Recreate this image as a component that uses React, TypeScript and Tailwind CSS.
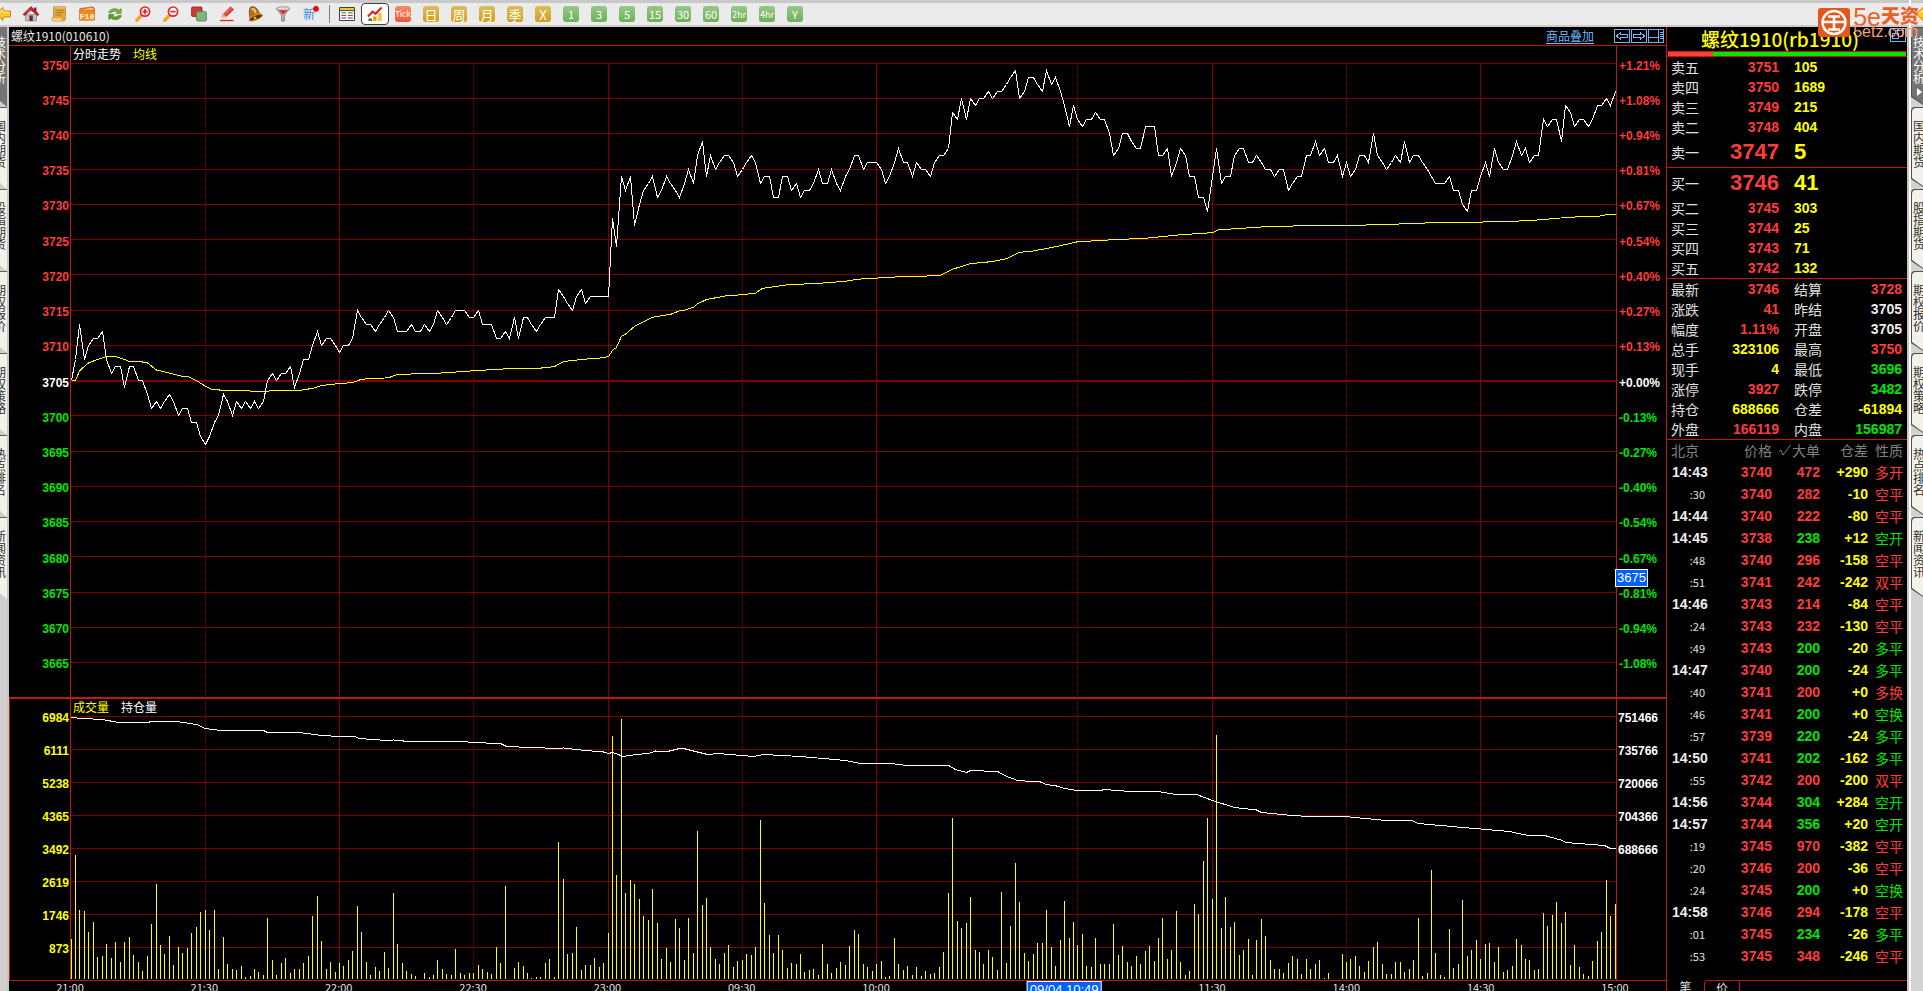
import type { ReactNode } from "react";

const MINUTES = 345;
const PLOT_W = 1545;
const PRICE_H = 634;
const VOL_H = 281;

// last price of every minute, as an offset from 3700
const prices = [
  5, 8, 13, 8, 10, 11, 11, 12, 8, 6, 7, 7, 4, 7, 7, 5, 5, 3, 1, 2,
  1, 2, 3, 2, 0, 1, 1, -1, -1, -3, -4, -3, -1, 0, 3, 2, 0, 2, 1, 2,
  1, 2, 1, 2, 5, 6, 5, 6, 6, 7, 4, 6, 8, 8, 10, 12, 10, 11, 11, 10,
  9, 10, 10, 11, 15, 14, 13, 13, 12, 13, 14, 15, 14, 12, 12, 12, 13, 12, 12, 13,
  12, 13, 15, 14, 13, 14, 15, 15, 15, 14, 14, 15, 13, 13, 13, 11, 11, 12, 11, 14,
  11, 14, 14, 13, 12, 13, 14, 14, 14, 18, 17, 16, 15, 17, 18, 16, 17, 17, 17, 17,
  17, 28, 24, 34, 32, 34, 27, 30, 32, 33, 34, 31, 32, 34, 33, 32, 31, 33, 35, 33,
  37, 39, 34, 37, 35, 36, 37, 37, 36, 34, 35, 36, 37, 36, 33, 34, 34, 31, 31, 34,
  34, 32, 33, 31, 32, 32, 33, 35, 33, 33, 35, 33, 32, 34, 35, 37, 37, 35, 36, 36,
  36, 35, 33, 34, 36, 38, 36, 36, 34, 36, 35, 35, 34, 36, 37, 37, 38, 43, 42, 45,
  42, 45, 44, 45, 45, 46, 45, 46, 46, 47, 48, 49, 45, 46, 48, 48, 47, 46, 49, 47,
  48, 46, 44, 41, 44, 42, 41, 42, 42, 43, 42, 42, 40, 37, 38, 40, 40, 39, 38, 38,
  41, 41, 41, 37, 37, 38, 34, 36, 38, 37, 34, 34, 31, 31, 29, 34, 38, 33, 34, 34,
  37, 38, 38, 36, 36, 37, 36, 35, 35, 34, 35, 35, 32, 33, 34, 34, 37, 37, 39, 37,
  38, 36, 36, 37, 34, 36, 34, 35, 37, 37, 36, 40, 37, 36, 35, 36, 37, 36, 39, 36,
  37, 37, 36, 35, 34, 33, 33, 33, 34, 32, 32, 30, 29, 32, 32, 34, 36, 34, 38, 36,
  35, 35, 37, 39, 37, 38, 36, 37, 37, 42, 41, 42, 42, 39, 44, 43, 41, 42, 42, 41,
  42, 44, 44, 45, 44, 46,
];

// [minute, average price]
const average = [
  [0, 3705], [1, 3705], [2, 3706.4], [4, 3707.5], [6, 3708], [8, 3708.4], [10, 3708.4], [12, 3708],
  [13, 3707.7], [15.5, 3707.7], [17, 3707.5], [19, 3706.5], [22.5, 3706], [25, 3705.6], [26.5, 3705.5],
  [28, 3705], [30, 3704.2], [31.5, 3703.8], [34, 3703.6], [42, 3703.5], [51, 3703.6], [54, 3703.9],
  [56, 3704.3], [60, 3704.6], [63, 3704.7], [65, 3705.2], [71, 3705.4], [73, 3705.9], [81, 3706],
  [90, 3706.4], [98, 3706.7], [106, 3706.8], [108, 3707], [110, 3707.7], [114, 3708], [118, 3708.2],
  [120, 3708.4], [121, 3709.3], [122, 3709.7], [123, 3711.3], [124, 3711.6], [126, 3712.7], [130, 3714],
  [134, 3714.4], [136, 3714.9], [137, 3715], [139, 3715.4], [140, 3715.9], [142, 3716.5], [146, 3717],
  [150, 3717.2], [153, 3717.4], [154.5, 3718.1], [160, 3718.6], [167, 3718.8], [173, 3719.1],
  [176, 3719.4], [184, 3719.7], [194, 3719.9], [197, 3720.8], [201, 3721.6], [206, 3721.9],
  [209, 3722.3], [212, 3723.2], [215, 3723.4], [220, 3724], [225, 3724.7], [233, 3725], [240, 3725.2],
  [248, 3725.7], [255, 3726], [256.5, 3726.4], [266, 3726.8], [276, 3727], [285, 3727], [296, 3727.2],
  [304, 3727.4], [315, 3727.5], [322, 3727.6], [328, 3727.8], [335, 3728.2], [341, 3728.3],
  [343.5, 3728.6], [345, 3728.6],
];

// bar height of every minute
const volumes = [
  40, 124, 69, 68, 47, 57, 22, 23, 35, 21, 37, 17, 37, 42, 24, 17, 8, 23, 55, 95,
  34, 25, 43, 14, 32, 26, 31, 46, 52, 67, 69, 49, 69, 10, 42, 15, 10, 9, 13, 2,
  3, 10, 7, 4, 61, 19, 4, 16, 21, 6, 10, 10, 16, 23, 63, 83, 38, 10, 17, 7,
  16, 13, 19, 28, 73, 47, 17, 4, 12, 8, 27, 11, 86, 35, 16, 8, 5, 3, 0, 6,
  2, 4, 19, 10, 5, 4, 30, 6, 4, 6, 6, 14, 10, 7, 5, 32, 16, 93, 0, 11,
  17, 13, 6, 1, 2, 2, 16, 20, 2, 137, 100, 25, 26, 52, 9, 14, 14, 21, 12, 16,
  46, 243, 104, 260, 86, 99, 95, 80, 63, 59, 90, 56, 20, 31, 17, 60, 51, 19, 61, 26,
  148, 74, 81, 32, 20, 15, 26, 34, 12, 18, 19, 25, 24, 32, 159, 76, 44, 26, 44, 29,
  11, 16, 15, 25, 7, 9, 10, 4, 35, 15, 6, 11, 17, 14, 33, 49, 45, 15, 12, 8,
  15, 18, 2, 3, 41, 15, 9, 13, 4, 12, 3, 8, 5, 6, 12, 27, 86, 161, 58, 51,
  56, 82, 29, 27, 15, 29, 22, 9, 87, 16, 53, 116, 77, 26, 18, 25, 36, 36, 69, 32,
  13, 39, 78, 41, 57, 34, 45, 13, 12, 41, 15, 15, 15, 55, 24, 33, 17, 13, 23, 15,
  28, 33, 18, 41, 61, 20, 29, 68, 17, 4, 8, 75, 65, 118, 161, 80, 244, 51, 82, 52,
  57, 24, 29, 40, 4, 39, 60, 43, 19, 10, 10, 6, 16, 23, 20, 5, 20, 10, 15, 19,
  1, 6, 0, 0, 25, 17, 20, 23, 13, 7, 18, 32, 37, 15, 5, 5, 17, 17, 7, 10,
  19, 61, 3, 6, 109, 26, 4, 2, 50, 11, 15, 79, 23, 29, 39, 20, 35, 36, 17, 32,
  7, 9, 13, 40, 34, 20, 19, 9, 10, 66, 53, 64, 77, 56, 67, 14, 34, 12, 5, 3,
  18, 38, 47, 99, 63, 75,
];

// [minute, y] of the open interest line
const openInterest = [
  [0, 18], [2.5, 19], [7, 20], [10.7, 23], [17, 23], [18, 22], [23.5, 22], [28, 25], [30, 29],
  [33.5, 31], [43, 31], [44, 33], [51, 33], [56, 36], [60, 37], [63.3, 37], [64.5, 39], [70.5, 41],
  [72, 40.5], [75.5, 42], [86.5, 42], [92.7, 43.5], [96, 44], [97.3, 47], [108.7, 49], [110, 48.5],
  [115, 51], [119, 52.5], [120, 54], [121, 53], [122.3, 55], [123.3, 57], [126.3, 55], [129, 54],
  [130.5, 51.5], [133.3, 52], [136, 49], [137.3, 49.5], [142.3, 55], [144.6, 54], [152.4, 57],
  [154.7, 55], [163, 57], [173, 61], [176.5, 64], [183.4, 64], [186.6, 66], [196, 66], [197.6, 70],
  [200, 73], [201, 71], [207, 72], [208.5, 76], [211.6, 81], [216.6, 82.5], [218, 85], [220.3, 86.5],
  [222, 89], [225, 91], [230, 91], [231, 90], [236.7, 92], [243, 92], [246.7, 95], [251.5, 95],
  [255, 101], [260, 108], [265, 110.5], [266, 113], [272.7, 116], [276.8, 117], [285.7, 117.5],
  [294, 121], [299.5, 121], [301, 124], [307.3, 126.5], [311, 128], [316.2, 130], [321.4, 132],
  [325, 135.5], [329.6, 136.5], [333.3, 141], [334, 143], [342.6, 146], [344, 149], [345, 149],
];

const priceLabels = Array.from({ length: 18 }, (_, i) => 3750 - i * 5);
const percentLabels = [
  "+1.21%", "+1.08%", "+0.94%", "+0.81%", "+0.67%", "+0.54%", "+0.40%", "+0.27%", "+0.13%",
  "+0.00%", "-0.13%", "-0.27%", "-0.40%", "-0.54%", "-0.67%", "-0.81%", "-0.94%", "-1.08%",
];
const volumeLabels = ["6984", "6111", "5238", "4365", "3492", "2619", "1746", "873"];
const interestLabels = ["751466", "735766", "720066", "704366", "688666", "", "", ""];

// label and the minutes until the next one
const timeLabels: [string, number][] = [
  ["21:00", 30], ["21:30", 30], ["22:00", 30], ["22:30", 30], ["23:00", 30], ["09:30", 30],
  ["10:00", 75], ["11:30", 30], ["14:00", 30], ["14:30", 30], ["15:00", 0],
];
const solidLines = [60, 120, 180, 255, 315];
const dottedLines = [30, 90, 150, 225, 285];

const RED = "text-[#ff3c3c]";
const GREEN = "text-[#00e600]";
const YELLOW = "text-[#ffff00]";
const WHITE = "text-[#ececec]";

const asks = [
  ["卖五", "3751", "105"],
  ["卖四", "3750", "1689"],
  ["卖三", "3749", "215"],
  ["卖二", "3748", "404"],
  ["卖一", "3747", "5"],
];
const bids = [
  ["买一", "3746", "41"],
  ["买二", "3745", "303"],
  ["买三", "3744", "25"],
  ["买四", "3743", "71"],
  ["买五", "3742", "132"],
];

const stats = [
  ["最新", "3746", RED, "结算", "3728", RED],
  ["涨跌", "41", RED, "昨结", "3705", WHITE],
  ["幅度", "1.11%", RED, "开盘", "3705", WHITE],
  ["总手", "323106", YELLOW, "最高", "3750", RED],
  ["现手", "4", YELLOW, "最低", "3696", GREEN],
  ["涨停", "3927", RED, "跌停", "3482", GREEN],
  ["持仓", "688666", YELLOW, "仓差", "-61894", YELLOW],
  ["外盘", "166119", RED, "内盘", "156987", GREEN],
];

const ticks = [
  ["14:43", "3740", "472", RED, "+290", "多开", RED],
  [":30", "3740", "282", RED, "-10", "空平", RED],
  ["14:44", "3740", "222", RED, "-80", "空平", RED],
  ["14:45", "3738", "238", GREEN, "+12", "空开", GREEN],
  [":48", "3740", "296", RED, "-158", "空平", RED],
  [":51", "3741", "242", RED, "-242", "双平", RED],
  ["14:46", "3743", "214", RED, "-84", "空平", RED],
  [":24", "3743", "232", RED, "-130", "空平", RED],
  [":49", "3743", "200", GREEN, "-20", "多平", GREEN],
  ["14:47", "3740", "200", GREEN, "-24", "多平", GREEN],
  [":40", "3741", "200", RED, "+0", "多换", RED],
  [":46", "3741", "200", GREEN, "+0", "空换", GREEN],
  [":57", "3739", "220", GREEN, "-24", "多平", GREEN],
  ["14:50", "3741", "202", GREEN, "-162", "多平", GREEN],
  [":55", "3742", "200", RED, "-200", "双平", RED],
  ["14:56", "3744", "304", GREEN, "+284", "空开", GREEN],
  ["14:57", "3744", "356", GREEN, "+20", "空开", GREEN],
  [":19", "3745", "970", RED, "-382", "空平", RED],
  [":20", "3746", "200", RED, "-36", "空平", RED],
  [":24", "3745", "200", GREEN, "+0", "空换", GREEN],
  ["14:58", "3746", "294", RED, "-178", "空平", RED],
  [":01", "3745", "234", GREEN, "-26", "多平", GREEN],
  [":53", "3745", "348", RED, "-246", "空平", RED],
];

const sideTabs = ["技术分析", "国内期货", "股指期货", "期权报价", "期权策略", "热点排名", "新闻资讯"];

const mx = (m: number) => Math.floor((m * (PLOT_W - 1)) / MINUTES) + 0.5;
const py = (p: number) => Math.round((3750 - p) * 7.047) + 0.5;

function Icon({ children }: { children: ReactNode }) {
  return (
    <svg viewBox="0 0 16 16" className="h-4 w-4">
      {children}
    </svg>
  );
}

const backArrow = (
  <Icon>
    <path d="M1 8 8 1.5V5h7.5v6H8v3.5z" fill="#ffc629" stroke="#c98a10" strokeWidth="1" />
    <path d="M3 8 7.4 4V6.2H14" fill="none" stroke="#fff0a0" />
  </Icon>
);

const drawings: { name: string; icon: ReactNode }[] = [
  { name: "后退", icon: backArrow },
  {
    name: "首页",
    icon: (
      <Icon>
        <path d="M2.5 8.5h11V15H2.5z" fill="#b9c3cb" stroke="#74808a" strokeWidth=".6" />
        <path d="M11.2 1.5h2.2v4h-2.2z" fill="#8e1414" />
        <path d="M8 .6 0 8.4l1.6 1.2L8 4l6.4 5.6L16 8.4z" fill="#c41c1c" stroke="#7e0c0c" strokeWidth=".6" />
        <path d="M6.4 9.5h3.4V15H6.4z" fill="#8c1a12" />
        <path d="M4 6.5 8 2.8" stroke="#f07070" strokeWidth=".8" />
      </Icon>
    ),
  },
  {
    name: "公告",
    icon: (
      <Icon>
        <path d="M2.5 .8h12v11.7c0 1.8-1 2.5-3 2.5H2.5C1 15 .8 14 .8 12h1.7z" fill="#e0a838" stroke="#a87420" strokeWidth=".6" />
        <path d="M4.5 4.2h8M4.5 6.6h8M4.5 9h6" stroke="#a87018" strokeWidth=".8" />
        <path d="M3 1.3h11v1.2H3z" fill="#f5cc66" />
        <path d="M.8 12h9.6c0 2 .4 3 1.2 3H3C1.2 15 .8 14 .8 12z" fill="#f4cc74" />
      </Icon>
    ),
  },
  {
    name: "F10",
    icon: (
      <Icon>
        <path d="M1 2.5 14 .8l1.5 2V14H.5V4z" fill="#e77d1c" stroke="#b65a0a" strokeWidth=".6" />
        <path d="M2 3.6 14.2 2v1.6H2z" fill="#fbe0b0" />
        <path d="M.5 5h15v9.5H.5z" fill="#ee8a24" />
        <text x="8" y="12.8" textAnchor="middle" fontSize="8" fontWeight="bold" fill="#fff6dc" fontFamily="Liberation Mono">
          F10
        </text>
      </Icon>
    ),
  },
  {
    name: "刷新",
    icon: (
      <Icon>
        <path d="M1.6 6.8C2.4 2.6 9 1.4 12 4.2L14.2 2.6V7.6H8.8L10.8 6C8.4 4.6 5.6 5.2 4.6 6.8z" fill="#7cb342" stroke="#4b8420" strokeWidth=".6" />
        <path d="M14.4 9.6c-.8 4.2-7.4 5.2-10.4 2.4L1.8 13.6v-5h5.4L5.2 10.2c2.4 1.4 5.2.8 6.2-.6z" fill="#5f9e2c" stroke="#3f7418" strokeWidth=".6" />
      </Icon>
    ),
  },
  {
    name: "放大",
    icon: (
      <Icon>
        <path d="M6.4 9.4 1.8 14.2" stroke="#f0a81c" strokeWidth="3.4" strokeLinecap="round" />
        <circle cx="10" cy="5.6" r="4.6" fill="#fff" stroke="#e02828" strokeWidth="1.7" />
        <path d="M7.4 5.6h5.2M10 3v5.2" stroke="#e02828" strokeWidth="1.7" />
      </Icon>
    ),
  },
  {
    name: "缩小",
    icon: (
      <Icon>
        <path d="M6.4 9.4 1.8 14.2" stroke="#f0a81c" strokeWidth="3.4" strokeLinecap="round" />
        <circle cx="10" cy="5.6" r="4.6" fill="#fff" stroke="#e02828" strokeWidth="1.7" />
        <path d="M7.4 5.6h5.2" stroke="#e02828" strokeWidth="1.7" />
      </Icon>
    ),
  },
  {
    name: "叠加",
    icon: (
      <Icon>
        <rect x=".6" y="1" width="10.4" height="9.4" rx="1" fill="#cf3a3a" stroke="#8c1c1c" strokeWidth=".8" />
        <rect x="5.4" y="5.6" width="10" height="9.4" rx="1.4" fill="#7db87a" stroke="#4a7f48" strokeWidth=".8" />
      </Icon>
    ),
  },
  {
    name: "画线",
    icon: (
      <Icon>
        <path d="M3 11.5 4.2 8 11.6.8l3 2.8L7 10.8z" fill="#e8402c" stroke="#a82010" strokeWidth=".5" />
        <path d="M4.2 8 7 10.8l-4.4 1.4z" fill="#f6cf8a" />
        <path d="M5.6 7.6 12.6 1.8" stroke="#ff9a80" />
        <path d="M1 14.5h13.5" stroke="#d83020" strokeWidth="1.4" />
      </Icon>
    ),
  },
  {
    name: "预警",
    icon: (
      <Icon>
        <path d="M3.2 1.2C7 -.4 10 2 11.6 5.4c.8 2 2.2 3 4 3.8L2.2 14.8C3.4 12 2.6 9 2.2 6z" fill="#b8701c" stroke="#6e3e08" strokeWidth=".8" />
        <ellipse cx="8.8" cy="11.6" rx="6.8" ry="2.4" transform="rotate(-22 8.8 11.6)" fill="#5c2c04" stroke="#e2a840" />
        <path d="M4.6 3.4c1.8-1 3.4.4 4.2 3.6" stroke="#f8d890" fill="none" strokeWidth="1.6" />
        <circle cx="8" cy="12" r="1.5" fill="#f0b030" />
      </Icon>
    ),
  },
  {
    name: "过滤",
    icon: (
      <Icon>
        <path d="M1.4 2.6 6.6 9v6h2.8V9l5.2-6.4z" fill="#b8b8bc" stroke="#707074" strokeWidth=".8" />
        <ellipse cx="8" cy="2.6" rx="6.6" ry="1.8" fill="#f2d8d8" stroke="#85858a" strokeWidth=".8" />
        <path d="M4 4.2h8L8.6 8H7.4z" fill="#e82828" />
      </Icon>
    ),
  },
  {
    name: "新消息",
    icon: (
      <Icon>
        <text x="6" y="12.6" textAnchor="middle" fontSize="12" fill="#3a8ae6" fontFamily="Noto Sans CJK SC">
          新
        </text>
        <circle cx="13" cy="2.8" r="2.9" fill="#f40808" />
      </Icon>
    ),
  },
];

const tableIcon = (
  <Icon>
    <path d="M.5 1.5h15v13H.5z" fill="#fff" stroke="#404040" />
    <path d="M1 2h14v2H1z" fill="#f4c820" />
    <path d="M1 4.6h14" stroke="#404040" />
    <path d="M2.4 6.8h4.8M9 6.8h4.8" stroke="#208030" />
    <path d="M2.4 9.4h4.8M9 9.4h4.8" stroke="#e02020" />
    <path d="M2.4 12h4.8M9 12h4.8" stroke="#2838c0" />
  </Icon>
);

const trendIcon = (
  <Icon>
    <path d="M1.4 12.4h3.6V15H1.4z" fill="#2f8f2f" />
    <path d="M6 10.4h3.6V15H6z" fill="#f0a020" />
    <path d="M10.8 7h4v8h-4z" fill="#f6c838" />
    <path d="M1 10.4 5.6 5.6l3 2.2L14.6 1.6" fill="none" stroke="#e02020" strokeWidth="2.2" />
  </Icon>
);

const periods: [string, string][] = [
  ["Tick", "bg-[#f0582c] font-['Liberation_Sans',sans-serif] text-[9px]"],
  ["日", "bg-[#cfa01c] text-[13px]"],
  ["周", "bg-[#cfa01c] text-[13px]"],
  ["月", "bg-[#cfa01c] text-[13px]"],
  ["季", "bg-[#cfa01c] text-[13px]"],
  ["X", "bg-[#cfa01c] text-[13px]"],
  ["1", "bg-[#6cb058] text-[11px]"],
  ["3", "bg-[#6cb058] text-[11px]"],
  ["5", "bg-[#6cb058] text-[11px]"],
  ["15", "bg-[#6cb058] text-[11px]"],
  ["30", "bg-[#6cb058] text-[11px]"],
  ["60", "bg-[#6cb058] text-[11px]"],
  ["2hr", "bg-[#6cb058] text-[9px]"],
  ["4hr", "bg-[#6cb058] text-[9px]"],
  ["Y", "bg-[#6cb058] text-[11px]"],
];

function Toolbar() {
  return (
    <div className="flex h-[27px] shrink-0 items-center overflow-hidden border-t-[3px] border-b-2 border-t-[#c9c9c9] border-b-[#d0cac8] bg-[#ebebeb]">
      <div className="-ml-[11px] flex items-center">
        {drawings.map((d) => (
          <button key={d.name} aria-label={d.name} className="flex h-[22px] w-7 items-center justify-center">
            {d.icon}
          </button>
        ))}
        <span className="flex w-2 justify-center">
          <span className="h-[18px] w-px bg-[#808080]" />
        </span>
        <button aria-label="报价" className="flex h-[22px] w-7 items-center justify-center">
          {tableIcon}
        </button>
        <button aria-label="分时" className="flex h-[22px] w-7 items-center justify-center rounded border border-[#404040] bg-white">
          {trendIcon}
        </button>
        {periods.map(([label, style]) => (
          <button key={label} className="flex h-[22px] w-7 items-center justify-center">
            <span
              className={`flex h-4 w-4 items-center justify-center rounded-[3px] bg-linear-to-b from-white/30 to-transparent leading-none text-[#fffff0] ${style}`}
            >
              {label}
            </span>
          </button>
        ))}
      </div>
    </div>
  );
}

function LeftRail() {
  return (
    <nav className="flex w-[9px] shrink-0 flex-col overflow-hidden border-r-2 border-[#ccc4c0] bg-[#cfcfcf]">
      {sideTabs.map((tab, i) => (
        <button
          key={tab}
          className={`flex shrink-0 justify-end overflow-hidden border-t pr-px text-xs leading-[12px] [clip-path:polygon(0_0,100%_0,100%_100%,0_calc(100%-6px))] ${
            i === 0 ? "h-20 border-[#747474] bg-[#747474] pt-2 text-white" : "h-[82px] border-[#606060] bg-[#f2f2ea] pt-3 text-[#303030]"
          }`}
        >
          <span className="w-3 shrink-0 break-all">{tab}</span>
        </button>
      ))}
    </nav>
  );
}

function RightRail() {
  return (
    <aside className="flex w-3 shrink-0 flex-col overflow-hidden bg-[#d2d2d2]">
      <div className="flex h-[27px] shrink-0 items-center border-t-[3px] border-b-2 border-t-[#c9c9c9] border-b-[#d0cac8] bg-[#ebebeb] pl-1">
        <span className="shrink-0">{backArrow}</span>
      </div>
      {sideTabs.map((tab, i) => (
        <button
          key={tab}
          className={`shrink-0 overflow-hidden rounded-tl bg-[#505050] pt-px pl-px text-left text-xs leading-[12px] [clip-path:polygon(0_0,100%_0,100%_calc(100%-2px),0_calc(100%-10px))] ${
            i === 0 ? "h-20 text-white" : "h-[82px] text-[#303030]"
          }`}
        >
          <span
            className={`flex h-full flex-col items-start rounded-tl pl-px [clip-path:polygon(0_0,100%_0,100%_calc(100%-3px),0_calc(100%-11px))] ${
              i === 0 ? "bg-[#747474] pt-2" : "bg-[#f2f2ea] pt-3"
            }`}
          >
            <span className="w-3 shrink-0 break-all">{tab}</span>
            {i === 0 && (
              <svg viewBox="0 0 5 8" className="mt-1 ml-1 h-2 w-[5px]">
                <path d="M0 0 5 4 0 8z" fill="#fff" />
              </svg>
            )}
          </span>
        </button>
      ))}
    </aside>
  );
}

function VerticalLines({ height }: { height: number }) {
  return (
    <>
      {solidLines.map((m) => (
        <line key={m} x1={mx(m)} x2={mx(m)} y1={0} y2={height} stroke="#800000" />
      ))}
      {dottedLines.map((m) => (
        <line key={m} x1={mx(m)} x2={mx(m)} y1={0} y2={height} stroke="#900000" strokeDasharray="1 1" />
      ))}
    </>
  );
}

function AxisColumn({ labels, className, tone }: { labels: (string | number)[]; className: string; tone: (i: number) => string }) {
  return (
    <div className={`flex flex-col font-['Liberation_Sans',sans-serif] text-xs font-bold ${className}`}>
      {labels.map((label, i) => (
        <span key={i} className={`flex min-h-0 flex-1 items-center leading-none ${tone(i)}`}>
          {label}
        </span>
      ))}
    </div>
  );
}

const priceTone = (i: number) => (i < 9 ? RED : i === 9 ? "text-white" : "text-[#00e600]");

function PriceChart() {
  return (
    <section className="relative flex min-h-0 flex-1">
      <AxisColumn labels={priceLabels} tone={priceTone} className="w-[62px] items-end border-r border-[#c01810] pt-0.5 pr-px pb-[15px]" />
      <div className="flex min-w-0 flex-1 flex-col">
        <div className="flex h-[17px] gap-3 pl-0.5 text-xs leading-[16px]">
          <span className="text-white">分时走势</span>
          <span className="text-[#ffff00]">均线</span>
        </div>
        <svg
          viewBox={`0 0 ${PLOT_W} ${PRICE_H}`}
          preserveAspectRatio="none"
          shapeRendering="crispEdges"
          className="min-h-0 w-full flex-1"
        >
          {priceLabels.map((p) => (
            <line key={p} x1={0} x2={PLOT_W} y1={py(p)} y2={py(p)} stroke="#800000" strokeWidth={p === 3705 ? 2 : 1} />
          ))}
          <VerticalLines height={PRICE_H} />
          <polyline
            fill="none"
            stroke="#ffff00"
            points={average.map(([m, p]) => `${mx(m)},${(3750 - p) * 7.047 + 0.5}`).join(" ")}
          />
          <polyline fill="none" stroke="#ffffff" points={prices.map((p, m) => `${mx(m)},${py(3700 + p)}`).join(" ")} />
        </svg>
      </div>
      <AxisColumn labels={percentLabels} tone={priceTone} className="w-[50px] items-start border-l border-[#c01810] pt-0.5 pb-[15px] pl-0.5" />
      <span className="absolute top-[523px] right-[18px] flex h-[18px] items-center border border-white bg-[#0060ff] px-px font-['Liberation_Sans',sans-serif] text-[13px] text-white">
        3675
      </span>
    </section>
  );
}

function VolumeChart() {
  const yellow = () => "text-[#ffff00]";
  return (
    <section className="flex h-[283px] shrink-0 border-t-2 border-[#c01810]">
      <AxisColumn labels={volumeLabels} tone={yellow} className="w-[62px] items-end border-x border-[#c01810] pt-0.5 pr-px pb-[15px]" />
      <div className="relative min-w-0 flex-1">
        <svg viewBox={`0 0 ${PLOT_W} ${VOL_H}`} preserveAspectRatio="none" shapeRendering="crispEdges" className="h-full w-full">
          {volumeLabels.map((label, i) => (
            <line key={label} x1={0} x2={PLOT_W} y1={17.5 + i * 33} y2={17.5 + i * 33} stroke="#800000" />
          ))}
          <VerticalLines height={VOL_H} />
          {volumes.map((v, m) => (
            <rect key={m} x={mx(m) - 0.5} y={280 - v} width={1} height={v} fill="#ffff00" />
          ))}
          <polyline fill="none" stroke="#ffffff" points={openInterest.map(([m, y]) => `${mx(m)},${y + 0.5}`).join(" ")} />
        </svg>
        <div className="absolute top-px left-0.5 flex gap-3 text-xs leading-[14px]">
          <span className="text-[#ffff00]">成交量</span>
          <span className="text-white">持仓量</span>
        </div>
      </div>
      <AxisColumn
        labels={interestLabels}
        tone={() => "text-white"}
        className="w-[50px] items-start border-l border-[#c01810] pt-0.5 pb-[15px] pl-px"
      />
    </section>
  );
}

function TimeAxis() {
  return (
    <div className="flex h-[11px] shrink-0 overflow-hidden border-t border-[#c01810] pr-[51px] pl-[61px] text-[11px] leading-[12px]">
      <div className="relative flex flex-1">
        {timeLabels.map(([label, span]) => (
          <span key={label} className="w-0 text-[#e0e0e0]" style={{ flexGrow: span }}>
            <span className="inline-block -translate-x-1/2">{label}</span>
          </span>
        ))}
        <span
          className="absolute top-0 h-[18px] -translate-x-1/2 border border-white bg-[#0060ff] px-0.5 font-['Liberation_Sans',sans-serif] text-[13px] leading-[16px] whitespace-nowrap text-white"
          style={{ left: `${(222 / MINUTES) * 100}%` }}
        >
          09/04 10:49
        </span>
      </div>
    </div>
  );
}

function ChartHeader() {
  return (
    <header className="flex h-[19px] shrink-0 items-center justify-between border-b border-[#c01810] pr-0.5 pb-px pl-0.5 text-xs">
      <h1 className="leading-none text-[#e8e8e8]">螺纹1910(010610)</h1>
      <div className="flex items-center gap-5">
        <a href="#overlay" className="leading-none text-[#70b8f8] underline underline-offset-2">
          商品叠加
        </a>
        <div className="flex gap-px">
          <button aria-label="左移">
            <svg viewBox="0 0 16 14" className="h-3.5 w-4" fill="none" stroke="#78b4f0" shapeRendering="crispEdges">
              <path d="M.5.5h15v13H.5z" />
              <path d="M2.5 7 6.5 3.5V5.5h7v3h-7v2z" />
            </svg>
          </button>
          <button aria-label="右移">
            <svg viewBox="0 0 16 14" className="h-3.5 w-4" fill="none" stroke="#78b4f0" shapeRendering="crispEdges">
              <path d="M.5.5h15v13H.5z" />
              <path d="M13.5 7 9.5 3.5V5.5h-7v3h7v2z" />
            </svg>
          </button>
          <button aria-label="布局">
            <svg viewBox="0 0 16 14" className="h-3.5 w-4" fill="none" stroke="#78b4f0" shapeRendering="crispEdges">
              <path d="M.5.5h15v13H.5zM10.5.5v13M.5 8.5h10" />
              <path d="M12 3.5h2.5M12 5.5h2.5M12 7.5h2.5M12 9.5h2.5" />
            </svg>
          </button>
        </div>
      </div>
    </header>
  );
}

function QuoteRow({ row, big }: { row: string[]; big: boolean }) {
  return (
    <div className={`grid grid-cols-[108px_1fr] gap-x-[15px] pb-px pl-1 ${big ? "h-[30px] text-[22px]" : "h-5 text-sm"}`}>
      <div className="flex items-center justify-between">
        <span className="text-sm leading-none text-[#e0e0e0]">{row[0]}</span>
        <span className={`font-['Liberation_Sans',sans-serif] leading-none font-bold ${RED}`}>{row[1]}</span>
      </div>
      <span className="flex items-center font-['Liberation_Sans',sans-serif] leading-none font-bold text-[#ffff00]">{row[2]}</span>
    </div>
  );
}

function QuotePanel() {
  return (
    <aside className="flex w-[241px] shrink-0 flex-col border-l border-[#c01810]">
      <div className="relative flex h-6 shrink-0 items-center pb-0.5 pl-[34px]">
        <h2 className="text-[19px] leading-none font-medium whitespace-nowrap text-[#ffff00]">螺纹1910(rb1910)</h2>
        <button aria-label="还原" className="absolute top-px right-px">
          <svg viewBox="0 0 16 14" className="h-3.5 w-4" fill="none" stroke="#78b4f0" shapeRendering="crispEdges">
            <path d="M.5.5h15v13H.5zM2.5 5.5h6v5h-6zM5.5 5.5v-3h7v6h-4" />
          </svg>
        </button>
      </div>
      <div className="flex h-1.5 shrink-0 border-y border-[#c01810] px-px">
        <div className="w-[19%] bg-[#ff3c3c]" />
        <div className="flex-1 bg-[#00e600]" />
      </div>
      <div className="border-b border-[#c01810]">
        {asks.map((row, i) => (
          <QuoteRow key={row[0]} row={row} big={i === 4} />
        ))}
      </div>
      <div className="border-b border-[#c01810]">
        {bids.map((row, i) => (
          <QuoteRow key={row[0]} row={row} big={i === 0} />
        ))}
      </div>
      <dl className="border-b border-[#c01810] text-sm">
        {stats.map((s) => (
          <div key={s[0]} className="grid h-5 grid-cols-[108px_108px] items-center gap-x-[15px] pb-px pl-1 leading-none">
            <div className="flex items-center justify-between">
              <dt className="text-[#e0e0e0]">{s[0]}</dt>
              <dd className={`font-['Liberation_Sans',sans-serif] font-bold ${s[2]}`}>{s[1]}</dd>
            </div>
            <div className="flex items-center justify-between">
              <dt className="text-[#e0e0e0]">{s[3]}</dt>
              <dd className={`font-['Liberation_Sans',sans-serif] font-bold ${s[5]}`}>{s[4]}</dd>
            </div>
          </div>
        ))}
      </dl>
      <table className="w-full table-fixed border-collapse text-right text-sm leading-none [&_td]:pb-0.5 [&_th]:pb-0.5">
        <colgroup>
          <col className="w-[42px]" />
          <col className="w-[63px]" />
          <col className="w-12" />
          <col className="w-12" />
          <col />
        </colgroup>
        <thead>
          <tr className="h-[22px] text-[#808080]">
            <th className="pl-1 text-left font-normal">北京</th>
            <th className="font-normal">价格</th>
            <th className="font-normal whitespace-nowrap">
              <span className="inline-flex items-center">
                <svg viewBox="0 0 14 12" className="h-3 w-3.5" fill="none" stroke="#808080">
                  <path d="M1 7.5 3 6l2 5L12.5 1" />
                </svg>
                大单
              </span>
            </th>
            <th className="font-normal">仓差</th>
            <th className="pr-1 font-normal">性质</th>
          </tr>
        </thead>
        <tbody>
          {ticks.map((t, i) => (
            <tr key={i} className="h-[22px] font-['Liberation_Sans',sans-serif] font-bold">
              {t[0].length > 3 ? (
                <td className="pl-[5px] text-left text-[#ececec]">{t[0]}</td>
              ) : (
                <td className="pr-1 font-['Noto_Sans_CJK_SC',sans-serif] text-[11px] font-normal text-[#e0e0e0]">{t[0]}</td>
              )}
              <td className={RED}>{t[1]}</td>
              <td className={t[3]}>{t[2]}</td>
              <td className="text-[#ffff00]">{t[4]}</td>
              <td className={`pr-1 font-['Noto_Sans_CJK_SC',sans-serif] font-normal ${t[6]}`}>{t[5]}</td>
            </tr>
          ))}
        </tbody>
      </table>
      <div className="mt-auto flex h-[11px] shrink-0 overflow-hidden text-xs leading-[14px] text-[#e0e0e0]">
        <button className="flex w-[37px] items-start justify-center">笔</button>
        <button className="flex w-9 items-start justify-center rounded-tl border-x border-t border-[#c01810]">价</button>
        <span className="flex-1 border-t border-[#c01810]" />
      </div>
    </aside>
  );
}

function Brand() {
  return (
    <div className="absolute top-2 right-1 flex items-start gap-[3px]">
      <svg viewBox="0 0 32 29" className="h-[29px] w-8">
        <rect width="32" height="29" rx="3" fill="#e4561c" />
        <circle cx="16" cy="14.5" r="11.5" fill="none" stroke="#fff" strokeWidth="2.4" />
        <path d="M10 8.5h12M5 14h22M16 8.5v13M10 21.5h12" stroke="#fff" strokeWidth="2.6" fill="none" />
      </svg>
      <div className="flex flex-col font-['Liberation_Sans','Noto_Sans_CJK_SC',sans-serif] whitespace-nowrap text-[#e8622c]">
        <span className="flex items-center leading-[18px]">
          <span className="text-[25px] leading-[18px]">5e</span>
          <span className="text-[19px] leading-[18px] font-black">天资</span>
        </span>
        <span className="text-[16px] leading-[12px] text-[#f6a080]">5etz.com</span>
      </div>
    </div>
  );
}

export default function App() {
  return (
    <div className="relative flex h-screen w-full overflow-hidden bg-white font-['Noto_Sans_CJK_SC',sans-serif]">
      <div className="flex min-w-0 flex-1 flex-col">
        <Toolbar />
        <div className="flex min-h-0 flex-1">
          <LeftRail />
          <main className="flex min-w-0 flex-1 flex-col bg-black">
            <ChartHeader />
            <PriceChart />
            <VolumeChart />
            <TimeAxis />
          </main>
          <div className="flex border-r-2 border-[#ccc4c0] bg-black">
            <QuotePanel />
          </div>
        </div>
      </div>
      <div className="w-0.5 shrink-0 bg-white" />
      <RightRail />
      <Brand />
    </div>
  );
}
